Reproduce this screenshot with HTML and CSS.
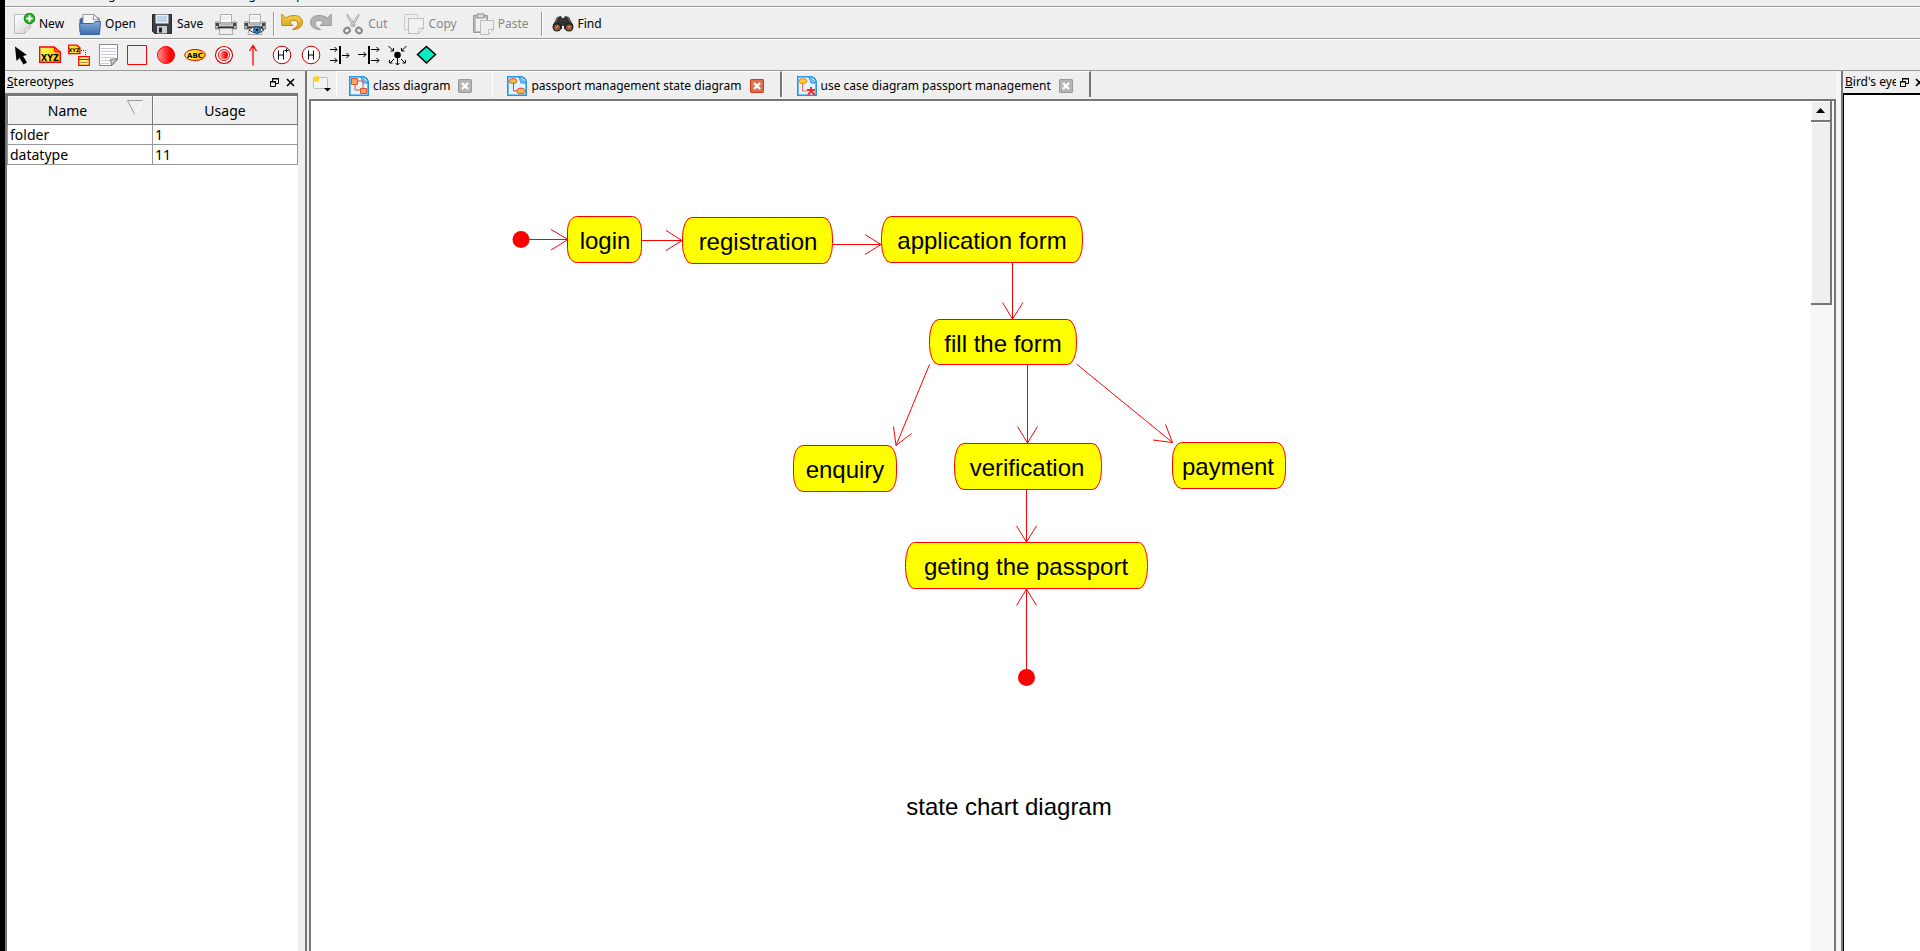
FILE: index.html
```html
<!DOCTYPE html>
<html lang="en">
<head>
<meta charset="utf-8">
<title>Passport management state diagram</title>
<link rel="stylesheet" href="styles.css">
</head>
<body>
<svg class="defs" width="0" height="0" aria-hidden="true">
  <defs>
    <linearGradient id="paper" x1="0" y1="0" x2="1" y2="1"><stop offset="0" stop-color="#fff"/><stop offset="1" stop-color="#d4d4d4"/></linearGradient>
    <linearGradient id="blue" x1="0" y1="0" x2="0" y2="1"><stop offset="0" stop-color="#86acdc"/><stop offset="1" stop-color="#3f6ead"/></linearGradient>
    <linearGradient id="gold" x1="0" y1="0" x2="0" y2="1"><stop offset="0" stop-color="#f7d254"/><stop offset="1" stop-color="#d49a10"/></linearGradient>
    <linearGradient id="ball" x1="0" y1="0" x2="1" y2="0"><stop offset="0" stop-color="#ff9a9a"/><stop offset=".75" stop-color="#f00"/></linearGradient>
    <linearGradient id="note" x1="0" y1="0" x2="1" y2="0"><stop offset="0" stop-color="#fffb5a"/><stop offset="1" stop-color="#ffc400"/></linearGradient>
    <linearGradient id="metal" x1="0" y1="0" x2="0" y2="1"><stop offset="0" stop-color="#fafafa"/><stop offset="1" stop-color="#9a9a9a"/></linearGradient>
    <symbol id="printer" viewBox="0 0 22 22">
      <path d="M5.500 1.500h11v8h-11z" fill="#fff" stroke="#aaa"/><path d="M7 4h8M7 6h8" stroke="#ddd"/>
      <path d="M.5 9h4l1 2h11l1-2h4v7H.5z" fill="url(#metal)" stroke="#888"/>
      <path d="M1 10h3v3H1zM18 10h3v3h-3z" fill="#444"/><path d="M3 13.500h16v2H3z" fill="#333"/>
      <path d="M5 15.500h12l1 6H4z" fill="#eee" stroke="#aaa"/>
    </symbol>
    <symbol id="sheet" viewBox="0 0 20 20">
      <path d="M.8.8H14q5 1 5.200 5.500v12.900H.8z" fill="#e2f4ff" stroke="#2196e8" stroke-width="1.600"/>
      <path d="M12 1l7 6h-5z" fill="#8dcaf8" stroke="#2196e8"/>
    </symbol>
    <symbol id="cross" viewBox="0 0 14 14"><path d="M4 4l6 6M10 4l-6 6" stroke="#fff" stroke-width="2.400"/></symbol>
    <symbol id="restore" viewBox="0 0 9 9"><path d="M2.500 3V.5h6v5H6M.5 3.500h5v5h-5z" fill="none" stroke="#000"/><path d="M2 1h7M0 4h6" stroke="#000"/></symbol>
    <symbol id="close" viewBox="0 0 9 9"><path d="M1 1l7 7M8 1L1 8" stroke="#000" stroke-width="1.600"/></symbol>
  </defs>
</svg>
<div class="window">
  <nav class="menubar"><span>File</span><span>Edit</span><span>Diagram</span><span>Window</span><span>Settings</span><span>Help</span></nav>

  <div class="toolbar main-tools" role="toolbar" aria-label="Main toolbar">
    <button class="tool"><svg viewBox="0 0 22 22"><path d="M1.500 1.500h16v13l-6 6h-10z" fill="url(#paper)" stroke="#bbb"/><path d="M17.500 14.500l-6 6 1-5z" fill="#fff" stroke="#bbb"/><circle cx="16.500" cy="5.500" r="5.300" fill="#22ad1e" stroke="#0c8a0c"/><path d="M16.500 2.200v6.600M13.200 5.500h6.600" stroke="#fff" stroke-width="2.200"/></svg>New</button>
    <button class="tool"><svg viewBox="0 0 22 22"><path d="M.5 19V6.500l2-2H20l1 3V19z" fill="#3d68a5"/><path d="M4 14V1.500h11l5 5V14z" fill="#f6f6f6" stroke="#999"/><path d="M15 1.500l-1 5 6 .5z" fill="#fff" stroke="#999"/><path d="M.5 10.500H14l2-2h5.500l-1 13H1.500z" fill="url(#blue)" stroke="#3d68a5"/></svg>Open</button>
    <button class="tool"><svg viewBox="0 0 22 22"><path d="M1.500 1.500h19v19H4l-2.500-2z" fill="#3c3f44" stroke="#25282c"/><path d="M4.500 1.500h13v9h-13z" fill="#e8f1fa"/><path d="M6 4h10M6 6h10M6 8h10" stroke="#8db3d8"/><path d="M6 13h10v7.500H6z" fill="#ccc"/><path d="M8 14.500h3v5H8z" fill="#222"/></svg>Save</button>
    <button class="tool icon-only" aria-label="Print"><svg><use href="#printer"/></svg></button>
    <button class="tool icon-only" aria-label="Print preview"><svg viewBox="0 0 22 22"><use href="#printer"/><path d="M5 17q7-7 15 0-7 6-15 0z" fill="#fff" stroke="#333"/><circle cx="13" cy="17" r="3.500" fill="#3585c8" stroke="#1c4d86"/><circle cx="13" cy="17" r="1.300" fill="#111"/></svg></button>
    <span class="separator"></span>
    <button class="tool icon-only" aria-label="Undo"><svg viewBox="0 0 22 22"><path d="M.8 1v11.500h11L8.500 9q5-3.500 8 0 2 4-5 7.500 9 0 10-6.500Q21.500 3 14 2.500 8.500 2 4.500 5z" fill="url(#gold)" stroke="#c08a14"/></svg></button>
    <button class="tool icon-only" aria-label="Redo" disabled><svg viewBox="0 0 22 22"><path d="M21.200 1v11.500h-11L13.500 9q-5-3.500-8 0-2 4 5 7.500-9 0-10-6.500Q.5 3 8 2.500q5.500-.5 9.500 2.500z" fill="#b4b4b4" stroke="#999"/></svg></button>
    <button class="tool" disabled><svg viewBox="0 0 22 22"><path d="M5 1l1 4 6 9 1.500-2zM17 1l-1 4-6 9-1.500-2z" fill="#ddd" stroke="#aaa"/><ellipse cx="5" cy="17.500" rx="3" ry="2.500" transform="rotate(-40 5 17.500)" fill="none" stroke="#888" stroke-width="2"/><ellipse cx="17" cy="17.500" rx="3" ry="2.500" transform="rotate(40 17 17.500)" fill="none" stroke="#888" stroke-width="2"/></svg>Cut</button>
    <button class="tool" disabled><svg viewBox="0 0 22 22"><path d="M1.500 1.500h13v15h-13z" fill="#f0f0f0" stroke="#ccc"/><path d="M5.500 5.500h15v10l-5 5h-10z" fill="#f1f1f1" stroke="#bdbdbd"/><path d="M20.500 15.500l-5 5 .5-5z" fill="#fff" stroke="#bdbdbd"/></svg>Copy</button>
    <button class="tool" disabled><svg viewBox="0 0 22 22"><path d="M1.500 2.500h14v17h-14z" fill="#bbb" stroke="#999"/><path d="M4 5h10v13H4z" fill="#f2f2f2"/><path d="M5 1h7v4H5z" fill="#ddd" stroke="#888"/><path d="M8.500 7.500h13v9l-5 5h-8z" fill="#efefef" stroke="#bbb"/><path d="M21.500 16.500l-5 5v-5z" fill="#fff" stroke="#bbb"/></svg>Paste</button>
    <span class="separator"></span>
    <button class="tool"><svg viewBox="0 0 22 22"><path d="M5 4l4-1 1 2h2l1-2 4 1 4 8-3 5-6-1v-3h-2v3l-6 1-3-5z" fill="#333"/><path d="M6 4l-3 7M16 4l3 7" stroke="#777"/><circle cx="5" cy="14" r="4.500" fill="#222"/><circle cx="17" cy="14" r="4.500" fill="#222"/><circle cx="5" cy="14.500" r="3" fill="#9b5b35"/><circle cx="17" cy="14.500" r="3" fill="#9b5b35"/><path d="M4 15l2-2M16 15l2-2" stroke="#ddb08c"/></svg>Find</button>
  </div>

  <div class="toolbar" role="toolbar" aria-label="Diagram tools">
    <button class="tool icon-only" aria-label="Select"><svg viewBox="0 0 22 22"><path d="M5 2.500l1.500 14.500 3-3 4 6.500 3.500-2-4-6.500 4-1z" fill="#000"/></svg></button>
    <button class="tool icon-only" aria-label="Text note"><svg viewBox="0 0 22 22"><path d="M.7 3H15l6.300 5v10.300H.7z" fill="url(#note)" stroke="#f00" stroke-width="1.400"/><path d="M15 3l1 5h5.300z" fill="#ff8000" stroke="#f00"/><text class="icon-label" x="11" y="16.500" font-size="8">XYZ</text></svg></button>
    <button class="tool icon-only" aria-label="Anchored note"><svg viewBox="0 0 22 22"><path d="M.7 1.200H9l3 2.500v6H.7z" fill="url(#note)" stroke="#f00" stroke-width="1.200"/><text class="icon-label" x="6" y="8" font-size="5">XYZ</text><path d="M13 6.500h4.500V12" fill="none" stroke="#f00" stroke-dasharray="1 1"/><path d="M10.700 12.700h10.600v8.600H10.700z" fill="#fff36b" stroke="#f00" stroke-width="1.200"/><path d="M11 15.500h10" stroke="#f00"/><path d="M12.500 18.500h7" stroke="#a84"/></svg></button>
    <button class="tool icon-only" aria-label="Note"><svg viewBox="0 0 22 22"><path d="M2.500.5h18v15l-5.500 6H2.500z" fill="#fff" stroke="#888"/><path d="M4 4.500h15M4 7.500h15M4 10.500h15M4 13.500h13M4 16.500h9M4 19.500h8" stroke="#c5cddd"/><path d="M20.500 14.500l-6 7-1-6z" fill="#ccc" stroke="#777"/></svg></button>
    <button class="tool icon-only" aria-label="Box"><svg viewBox="0 0 22 22"><path d="M1.500 1.500h19v19h-19z" fill="none" stroke="#f00"/></svg></button>
    <button class="tool icon-only" aria-label="Initial state"><svg viewBox="0 0 22 22"><circle cx="11" cy="11" r="8.500" fill="url(#ball)" stroke="#f00"/></svg></button>
    <button class="tool icon-only" aria-label="State"><svg viewBox="0 0 22 22"><ellipse cx="11" cy="11" rx="10.300" ry="5.500" fill="url(#note)" stroke="#e00000"/><text class="icon-label" x="11" y="13.500" font-size="7">ABC</text></svg></button>
    <button class="tool icon-only" aria-label="End state"><svg viewBox="0 0 22 22"><circle cx="11" cy="11" r="8.500" fill="#fff" stroke="#e00000" stroke-width="1.200"/><circle cx="11" cy="11" r="5.500" fill="none" stroke="#f00"/><circle cx="11" cy="11" r="4" fill="url(#ball)"/></svg></button>
    <button class="tool icon-only" aria-label="Transition"><svg viewBox="0 0 22 22"><path d="M11 21.500V2M7.500 7L11 1.500 14.500 7" fill="none" stroke="#f00" stroke-width="1.300"/></svg></button>
    <button class="tool icon-only" aria-label="Deep history"><svg viewBox="0 0 22 22"><circle cx="11" cy="11" r="8.800" fill="#fff" stroke="#d00000"/><path d="M7.500 6.500v9M12.500 6.500v9M7.500 11h5M13.500 6.500h4M15.500 4.500v4" stroke="#000"/></svg></button>
    <button class="tool icon-only" aria-label="Shallow history"><svg viewBox="0 0 22 22"><circle cx="11" cy="11" r="8.800" fill="#fff" stroke="#d00000"/><path d="M8.500 6.500v9M13.500 6.500v9M8.500 11h5" stroke="#000"/></svg></button>
    <button class="tool icon-only" aria-label="Join"><svg viewBox="0 0 22 22"><path d="M11 2v18" stroke="#000" stroke-width="2"/><path d="M1 5.500h7M1 16.500h7M13 11.500h7M5.500 3L8 5.500 5.500 8M5.500 14L8 16.500 5.500 19M17.500 9l2.500 2.500-2.500 2.500" fill="none" stroke="#000"/></svg></button>
    <button class="tool icon-only" aria-label="Fork"><svg viewBox="0 0 22 22"><path d="M11 2v18" stroke="#000" stroke-width="2"/><path d="M0 10.500h8M13 5.500h8M13 16.500h8M5.500 8L8 10.500 5.500 13M18.500 3L21 5.500 18.500 8M18.500 14l2.500 2.500-2.500 2.500" fill="none" stroke="#000"/></svg></button>
    <button class="tool icon-only" aria-label="Junction"><svg viewBox="0 0 22 22"><circle cx="10.500" cy="11" r="3.300"/><path d="M1.500 2l5 5M19.500 2l-5 5M6.500 4v3h-3M14.500 4v3h3M7 15l-4 4M14 15l4 4M2.500 16v3h3M18.500 16v3h-3M10.500 14v7M8.500 19l2 2 2-2" fill="none" stroke="#000"/></svg></button>
    <button class="tool icon-only" aria-label="Choice"><svg viewBox="0 0 22 22"><path d="M10.500 2.500l9 8-9 8.500-9-8.500z" fill="#00f0c0" stroke="#000" stroke-width="1.500"/></svg></button>
  </div>

  <main class="workspace">
    <aside class="dock">
      <header class="dock-title"><h2><u>S</u>tereotypes</h2><button class="dock-button" aria-label="Float"><svg><use href="#restore"/></svg></button><button class="dock-button" aria-label="Close"><svg><use href="#close"/></svg></button></header>
      <div class="dock-body">
        <table class="stereotypes">
          <thead><tr><th><div class="sorted"><span>Name</span><svg viewBox="0 0 17 16"><path d="M16 .5H.5L8 15" fill="none" stroke="#999"/><path d="M16 .5L8 15" stroke="#fff"/></svg></div></th><th>Usage</th></tr></thead>
          <tbody><tr><td>folder</td><td>1</td></tr><tr><td>datatype</td><td>11</td></tr></tbody>
        </table>
      </div>
    </aside>

    <section class="editor">
      <div class="tabs" role="tablist">
        <button class="new-tab" aria-label="New diagram"><svg viewBox="0 0 20 18"><path d="M1.500 3.500q0-1 1-1h12q1 0 1 1v9q0 1-1 1h-12q-1 0-1-1z" fill="#f4f4f4" stroke="#bbb"/><circle cx="4.500" cy="4" r="3" fill="#fbd32b"/><path d="M12 13h7l-3.500 3.500z" fill="#000"/></svg></button>
        <div class="tab" role="tab"><svg class="tab-icon" viewBox="0 0 20 20"><use href="#sheet"/><path d="M6 8v6h6M9 5h5v7" fill="none" stroke="#f04a28"/><path d="M2.500 2.500h6v6h-6zM11.500 12.500h6v5h-6z" fill="#ffa46b" stroke="#e8502a"/></svg><span>class diagram</span><button class="tab-close" aria-label="Close tab"><svg><use href="#cross"/></svg></button></div>
        <div class="tab active" role="tab" aria-selected="true"><svg class="tab-icon" viewBox="0 0 20 20"><use href="#sheet"/><path d="M6.500 7v8H12" fill="none" stroke="#f03a28"/><ellipse cx="6" cy="5" rx="4" ry="2.500" fill="#e8bd4e" stroke="#e85a2a"/><ellipse cx="14" cy="15" rx="4.200" ry="2.800" fill="#e8bd4e" stroke="#e8402a"/></svg><span>passport management state diagram</span><button class="tab-close" aria-label="Close tab"><svg><use href="#cross"/></svg></button></div>
        <div class="tab last" role="tab"><svg class="tab-icon" viewBox="0 0 20 20"><use href="#sheet"/><path d="M5.500 7v8H10" fill="none" stroke="#f06a48"/><ellipse cx="6" cy="5" rx="4" ry="2.500" fill="#ffc928" stroke="#e88a2a"/><path d="M14 11v5M10 14h8M11 19l3-4 4 4" fill="none" stroke="#ff2a2a" stroke-width="2"/></svg><span>use case diagram passport management</span><button class="tab-close" aria-label="Close tab"><svg><use href="#cross"/></svg></button></div>
      </div>
      <div class="frame">
        <div class="canvas">
          <svg class="diagram" width="1500" height="850" viewBox="311 100 1500 850">
            <g class="edges">
              <path d="M529 238.500H568M551 228.500L568 238.500 551 249"/>
              <path d="M641 239.500H682M666 229.500L682 239.500 666 249.500"/>
              <path d="M833 243.500H881M865 233.500L881 243.500 865 253.500"/>
              <path d="M1012.500 262V318M1002.500 301.500L1012.500 318 1023 301.500"/>
              <path d="M929.500 363.500L896 444.500M893.500 425.500L896 444.500 911.500 432.500"/>
              <path d="M1027.500 364V442M1017.500 425.500L1027.500 442 1037.500 425.500"/>
              <path d="M1076.500 363L1172.500 441.500M1165.500 423.500L1172.500 441.500 1153 439"/>
              <path d="M1026.500 488V541M1016.500 525L1026.500 541 1036.500 525"/>
              <path d="M1026.500 668V588M1016.500 604.500L1026.500 588 1036.500 604.500"/>
            </g>
            <circle class="dot" cx="521" cy="238.500" r="8.500"/>
            <circle class="dot" cx="1026.500" cy="676.500" r="8.500"/>
            <g class="states">
              <rect x="567.500" y="215.500" width="74" height="46" rx="9" ry="14"/>
              <rect x="682.500" y="216.500" width="150" height="46" rx="9" ry="20"/>
              <rect x="881.500" y="215.500" width="201" height="46" rx="9" ry="20"/>
              <rect x="929.500" y="318.500" width="147" height="45" rx="9" ry="20"/>
              <rect x="793.500" y="444.500" width="103" height="46" rx="9" ry="17"/>
              <rect x="954.500" y="442.500" width="147" height="46" rx="9" ry="20"/>
              <rect x="1172.500" y="441.500" width="113" height="46" rx="9" ry="17"/>
              <rect x="905.500" y="541.500" width="242" height="46" rx="9" ry="21"/>
            </g>
            <g class="labels">
              <text x="605" y="248">login</text>
              <text x="758" y="249">registration</text>
              <text x="982" y="248">application form</text>
              <text x="1003" y="351">fill the form</text>
              <text x="845" y="477">enquiry</text>
              <text x="1027" y="475">verification</text>
              <text x="1228" y="474">payment</text>
              <text x="1026" y="574">geting the passport</text>
              <text x="1009" y="814">state chart diagram</text>
            </g>
          </svg>
        </div>
        <div class="scrollbar"><button class="scroll-up" aria-label="Scroll up"><svg viewBox="0 0 9 5"><path d="M0 5L4.500 0 9 5z"/></svg></button><div class="thumb"></div></div>
      </div>
    </section>

    <aside class="dock birdseye">
      <header class="dock-title"><h2><u>B</u>ird's eye</h2><button class="dock-button" aria-label="Float"><svg><use href="#restore"/></svg></button><button class="dock-button" aria-label="Close"><svg><use href="#close"/></svg></button></header>
      <div class="dock-body"></div>
    </aside>
  </main>
</div>
</body>
</html>
```
FILE: styles.css
```css
* { box-sizing: border-box; }
body {
  margin: 0;
  background: #efefef;
  color: #000;
  font: 12px/16px "Noto Sans", "DejaVu Sans", sans-serif;
}
button {
  padding: 0;
  border: 0;
  background: none;
  color: inherit;
  font: inherit;
}
svg { display: block; flex: none; }
.defs { position: absolute; }
.window {
  display: flex;
  flex-direction: column;
  height: 100vh;
  overflow: hidden;
  border-left: 5px solid #000;
}
.menubar {
  display: flex;
  align-items: flex-end;
  gap: 16px;
  flex: none;
  height: 6px;
  padding-left: 12px;
  overflow: hidden;
  line-height: 22px;
}
.toolbar {
  display: flex;
  align-items: center;
  flex: none;
  height: 32px;
  padding-left: 1px;
  border-top: 1px solid #999;
  box-shadow: inset 0 1px #fff;
}
.main-tools { padding-top: 2px; }
.tool {
  display: flex;
  align-items: center;
  gap: 4px;
  height: 26px;
  padding: 0 8px 0 7px;
}
.tool:disabled { color: #888; }
.tool svg { width: 22px; height: 22px; }
.icon-only { width: 29px; padding: 0; justify-content: center; }
.separator {
  width: 2px;
  height: 24px;
  margin: 0 2px 0 4px;
  border-left: 1px solid #999;
  border-right: 1px solid #fff;
}
.icon-label {
  font-family: "DejaVu Sans", sans-serif;
  font-weight: bold;
  text-anchor: middle;
}
.workspace {
  display: flex;
  flex: 1;
  min-height: 0;
  border-top: 1px solid #999;
}
.dock {
  display: flex;
  flex-direction: column;
  flex: none;
  width: 300px;
  padding-right: 7px;
}
.dock-title {
  display: flex;
  align-items: center;
  gap: 7px;
  flex: none;
  height: 22px;
  padding: 0 3px 0 2px;
}
.dock-title h2 {
  flex: 1;
  min-width: 0;
  margin: 0;
  overflow: hidden;
  white-space: nowrap;
  font: inherit;
}
.dock-button svg { width: 9px; height: 9px; }
.dock-body {
  flex: 1;
  border: solid #777;
  border-width: 2px 0 0 2px;
  background: #fff;
}
.stereotypes {
  width: 100%;
  border-collapse: collapse;
  table-layout: fixed;
  font: 14px/19px "Noto Sans", sans-serif;
}
.stereotypes th {
  height: 29px;
  padding: 0;
  border: 1px solid #777;
  background: #efefef;
  box-shadow: inset 1px 1px #fff;
  font-weight: normal;
}
.stereotypes td { height: 20px; padding: 0 2px; border: 1px solid #999; }
.sorted { display: flex; align-items: center; padding-right: 8px; }
.sorted span { flex: 1; }
.sorted svg { width: 17px; height: 16px; margin-bottom: 4px; }
.editor {
  display: flex;
  flex-direction: column;
  flex: 1;
  min-width: 0;
  padding-left: 2px;
  border-left: 2px solid #777;
  border-right: 5px solid #f6f6f6;
}
.tabs { display: flex; align-items: stretch; flex: none; height: 28px; padding-bottom: 2px; }
.new-tab { width: 27px; padding-left: 3px; }
.new-tab svg { width: 20px; height: 18px; }
.tab {
  display: flex;
  align-items: center;
  gap: 4px;
  padding: 3px 20px 0 12px;
  border-top: 1px solid #fff;
  border-left: 1px solid #fff;
}
.tab.active, .tab.last { border-right: 2px solid #777; padding-right: 16px; }
.tab.active, .tab.last { padding-left: 14px; }
.tab-icon { width: 20px; height: 20px; }
.tab-close {
  width: 14px;
  height: 14px;
  margin-left: 4px;
  border-radius: 2px;
  background: #b5b5b5;
  box-shadow: inset 0 0 0 1px #999;
}
.active .tab-close { background: #dd7050; box-shadow: inset 0 0 0 1px #cc3820; }
.tab-close svg { width: 14px; height: 14px; }
.frame {
  display: flex;
  flex: 1;
  min-height: 0;
  border: solid #777;
  border-width: 2px 2px 0;
}
.canvas { flex: 1; min-width: 0; overflow: hidden; background: #fff; }
.edges { fill: none; stroke: #f00; }
.dot { fill: #f00; }
.states { fill: #ff0; stroke: #f00; }
.labels { font: 24px "Liberation Sans", Arial, sans-serif; text-anchor: middle; }
.scrollbar {
  display: flex;
  flex-direction: column;
  flex: none;
  width: 23px;
  padding-right: 2px;
  background: #f7f7f7;
}
.scroll-up, .thumb {
  display: grid;
  place-items: center;
  flex: none;
  height: 21px;
  border: solid #777;
  border-width: 0 2px 2px 0;
  background: #efefef;
  box-shadow: inset 1px 1px #fff;
}
.scroll-up svg { width: 9px; height: 5px; }
.thumb { height: 183px; }
.birdseye { width: 79px; padding: 0; border-left: 2px solid #777; overflow: hidden; }
.birdseye .dock-title { width: 84px; gap: 6px; }
.birdseye .dock-title h2 { flex: none; width: 51px; margin-right: -2px; }
.birdseye .dock-body { border-color: #000; border-width: 2px 0 0 1px; }
```
